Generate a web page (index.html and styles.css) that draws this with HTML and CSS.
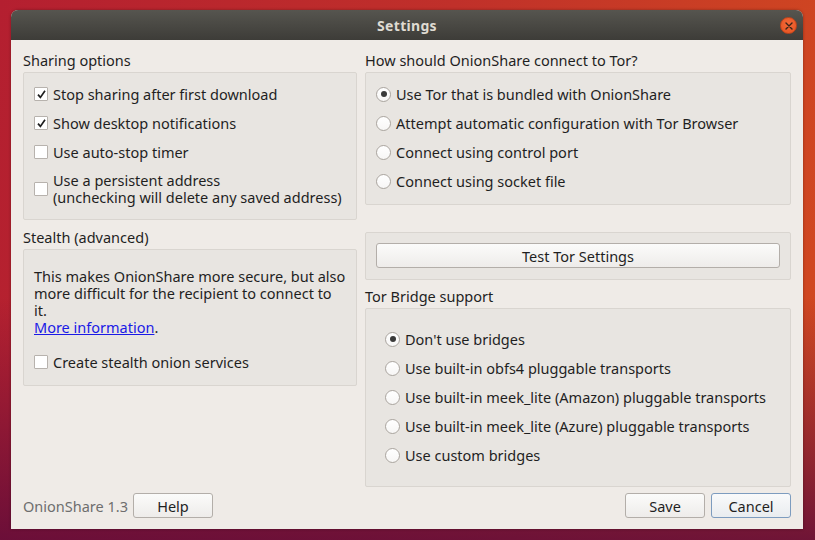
FILE: index.html
```html
<!DOCTYPE html>
<html>
<head>
<meta charset="utf-8">
<link rel="stylesheet" href="styles.css">
</head>
<body>
<div class="window">
  <div class="titlebar">
    <span class="title">Settings</span>
    <span class="close"><svg width="8" height="8" viewBox="0 0 8 8"><path d="M1 1L7 7M7 1L1 7" stroke="#3a2418" stroke-width="1.4" stroke-linecap="round"/></svg></span>
  </div>
  <div class="content">
    <div class="columns">
      <div class="col col-left">
        <div class="label">Sharing options</div>
        <div class="group group-sharing">
          <div class="row"><span class="check on"><svg width="11" height="11" viewBox="0 0 11 11"><path d="M2 5.6L4.4 8.4L9 1.8" fill="none" stroke="#1e1e1e" stroke-width="1.7"/></svg></span><span>Stop sharing after first download</span></div>
          <div class="row"><span class="check on"><svg width="11" height="11" viewBox="0 0 11 11"><path d="M2 5.6L4.4 8.4L9 1.8" fill="none" stroke="#1e1e1e" stroke-width="1.7"/></svg></span><span>Show desktop notifications</span></div>
          <div class="row"><span class="check"></span><span>Use auto-stop timer</span></div>
          <div class="row two"><span class="check"></span><span class="twotext">Use a persistent address<br>(unchecking will delete any saved address)</span></div>
        </div>
        <div class="label label-gap">Stealth (advanced)</div>
        <div class="group group-stealth">
          <p class="desc">This makes OnionShare more secure, but also<br>more difficult for the recipient to connect to<br>it.<br><a href="#" class="link">More information</a>.</p>
          <div class="row"><span class="check"></span><span>Create stealth onion services</span></div>
        </div>
      </div>
      <div class="col col-right">
        <div class="label">How should OnionShare connect to Tor?</div>
        <div class="group group-connect">
          <div class="row"><span class="radio on"></span><span>Use Tor that is bundled with OnionShare</span></div>
          <div class="row"><span class="radio"></span><span>Attempt automatic configuration with Tor Browser</span></div>
          <div class="row"><span class="radio"></span><span>Connect using control port</span></div>
          <div class="row"><span class="radio"></span><span>Connect using socket file</span></div>
        </div>
        <div class="group group-test">
          <button class="btn btn-wide">Test Tor Settings</button>
        </div>
        <div class="label label-bridge">Tor Bridge support</div>
        <div class="group group-bridge">
          <div class="row"><span class="radio on"></span><span>Don't use bridges</span></div>
          <div class="row"><span class="radio"></span><span>Use built-in obfs4 pluggable transports</span></div>
          <div class="row"><span class="radio"></span><span>Use built-in meek_lite (Amazon) pluggable transports</span></div>
          <div class="row"><span class="radio"></span><span>Use built-in meek_lite (Azure) pluggable transports</span></div>
          <div class="row"><span class="radio"></span><span>Use custom bridges</span></div>
        </div>
      </div>
    </div>
    <div class="footer">
      <span class="version">OnionShare 1.3</span>
      <button class="btn btn-small">Help</button>
      <span class="spacer"></span>
      <button class="btn btn-small">Save</button>
      <button class="btn btn-small btn-focus">Cancel</button>
    </div>
  </div>
</div>
</body>
</html>
```
FILE: styles.css
```css
* { box-sizing: border-box; }
html, body { margin: 0; padding: 0; }
body {
  width: 815px;
  height: 540px;
  overflow: hidden;
  font-family: "Noto Sans", "Open Sans", sans-serif;
  font-size: 14.5px;
  color: #1f1f1f;
  background:
    linear-gradient(to bottom, rgba(94, 11, 58, 0) 0%, rgba(94, 11, 58, 0) 55%, rgba(94, 11, 58, 0.85) 100%),
    linear-gradient(100deg, #b41f30 0%, #c0302a 50%, #d24a20 100%);
  padding: 10px 12px 0 11px;
}
.window {
  width: 792px;
  height: 519px;
  background: #efebe7;
  border-radius: 7px 7px 0 0;
  display: flex;
  flex-direction: column;
  overflow: hidden;
  box-shadow: 0 0 3px rgba(0,0,0,0.35);
}
.titlebar {
  height: 30px;
  flex: none;
  background: linear-gradient(to bottom, #56554f, #3d3c38);
  display: flex;
  align-items: center;
  justify-content: center;
  position: relative;
}
.title {
  color: #dfdbd2;
  font-weight: bold;
  font-size: 14px;
  letter-spacing: 0.3px;
}
.close {
  position: absolute;
  right: 6px;
  top: 7px;
  width: 17px;
  height: 17px;
  border-radius: 50%;
  background: radial-gradient(circle at 50% 40%, #f26a3a, #e4511f);
  border: 1px solid #c0441c;
  display: flex;
  align-items: center;
  justify-content: center;
}
.content {
  flex: 1;
  padding: 11px 12px 11px 12px;
  display: flex;
  flex-direction: column;
}
.columns {
  display: grid;
  grid-template-columns: 334px 1fr;
  column-gap: 8px;
  align-items: start;
  flex: 1;
}
.col { display: flex; flex-direction: column; }
.label {
  line-height: 18px;
  height: 18px;
  margin-bottom: 3px;
  white-space: nowrap;
}
.label-gap { margin-top: 8px; }
.label-bridge { margin-top: 7px; }
.group {
  background: #e8e5e1;
  border: 1px solid #d9d5d0;
  border-radius: 2px;
}
.row {
  display: flex;
  align-items: center;
  line-height: 18px;
  min-height: 18px;
  white-space: nowrap;
}
.twotext { display: block; line-height: 17px; }
.group-sharing {
  padding: 12px 10px 13px 10px;
  display: flex;
  flex-direction: column;
  gap: 11px;
}
.group-stealth {
  padding: 18px 10px 14px 10px;
}
.desc {
  margin: 0 0 17px 0;
  line-height: 17px;
  white-space: nowrap;
}
.link { color: #1a1ae6; text-decoration: underline; }
.check {
  width: 14px;
  height: 14px;
  flex: none;
  background: #ffffff;
  border: 1px solid #b7b2ad;
  border-radius: 1px;
  margin-right: 5px;
  display: flex;
  align-items: center;
  justify-content: center;
}
.radio {
  width: 15px;
  height: 15px;
  flex: none;
  border-radius: 50%;
  background: linear-gradient(#ffffff, #f7f6f5);
  border: 1px solid #aaa59f;
  margin-right: 5px;
  display: flex;
  align-items: center;
  justify-content: center;
}
.radio.on::after {
  content: "";
  width: 6px;
  height: 6px;
  border-radius: 50%;
  background: #3a3a3a;
}
.group-connect {
  padding: 12px 10px 14px 10px;
  display: flex;
  flex-direction: column;
  gap: 11px;
}
.group-test {
  margin-top: 27px;
  padding: 10px 10px 11px 10px;
  display: flex;
}
.group-bridge {
  padding: 21px 10px 22px 19px;
  display: flex;
  flex-direction: column;
  gap: 11px;
}
.btn {
  font-family: inherit;
  font-size: 14.5px;
  color: #1f1f1f;
  height: 25px;
  padding: 0;
  background: linear-gradient(to bottom, #fbfbfa, #eeecea);
  border: 1px solid #b3aea9;
  border-radius: 3px;
}
.btn-wide { flex: 1; }
.footer {
  display: flex;
  align-items: center;
  margin-top: 6px;
  height: 25px;
}
.version {
  color: #6e6e6e;
  margin-right: 5px;
}
.btn-small { width: 80px; }
.spacer { flex: 1; }
.btn-focus {
  margin-left: 6px;
  border-color: #7d9cbf;
  background: linear-gradient(to bottom, #f9fafb, #e9ecef);
}
```
